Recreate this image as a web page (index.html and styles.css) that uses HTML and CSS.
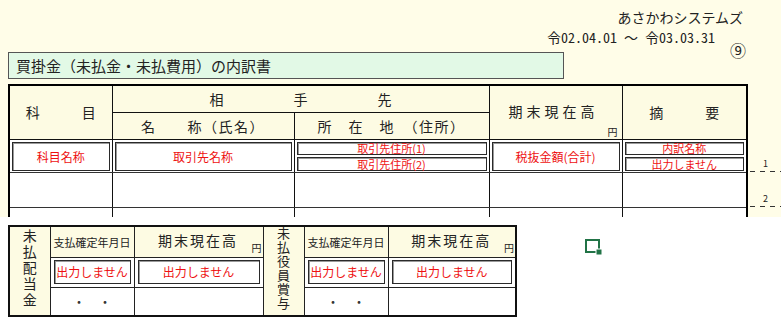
FILE: index.html
```html
<!DOCTYPE html>
<html lang="ja">
<head>
<meta charset="utf-8">
<title>買掛金（未払金・未払費用）の内訳書</title>
<link rel="stylesheet" href="styles.css">
</head>
<body>
<section class="top">
  <div class="meta">
    <div class="company">あさかわシステムズ</div>
    <div class="period">令<span class="hw">02.04.01 </span>～<span class="hw"> </span>令<span class="hw">03.03.31</span></div>
  </div>
  <div class="title-row">
    <div class="title">買掛金（未払金・未払費用）の内訳書</div>
    <div class="page-no">⑨</div>
  </div>
  <table class="main">
    <colgroup>
      <col class="c-kamoku"><col class="c-name"><col class="c-addr"><col class="c-amt"><col class="c-memo"><col class="c-no">
    </colgroup>
    <tr class="h1">
      <th rowspan="2" class="first">科　　　目</th>
      <th colspan="2">相　　　　　手　　　　　先</th>
      <th rowspan="2">
        <div class="amt-wrap"><span class="amt-label">期末現在高</span><span class="yen">円</span></div>
      </th>
      <th rowspan="2" class="last">摘　　　要</th>
      <td rowspan="2" class="no-h"></td>
    </tr>
    <tr class="h2">
      <th class="sp">名　　称（氏名）</th>
      <th class="sp">所　在　地　（住所）</th>
    </tr>
    <tr class="data">
      <td class="first"><div class="box">科目名称</div></td>
      <td><div class="box">取引先名称</div></td>
      <td><div class="pair"><div class="box half">取引先住所(1)</div><div class="box half">取引先住所(2)</div></div></td>
      <td><div class="box">税抜金額(合計)</div></td>
      <td class="last"><div class="pair"><div class="box half">内訳名称</div><div class="box half">出力しません</div></div></td>
      <td class="no">1</td>
    </tr>
    <tr class="blank">
      <td class="first"></td><td></td><td></td><td></td><td class="last"></td>
      <td class="no">2</td>
    </tr>
    <tr class="blank">
      <td class="first"></td><td></td><td></td><td></td><td class="last"></td>
      <td class="no"></td>
    </tr>
  </table>
</section>
<section class="bottom">
  <table class="sub">
    <colgroup>
      <col class="s-vert"><col class="s-date"><col class="s-amt"><col class="s-vert"><col class="s-date"><col class="s-amt2">
    </colgroup>
    <tr class="sh">
      <th rowspan="3" class="vert"><span class="vtext v5">未払配当金</span></th>
      <th class="date-h">支払確定年月日</th>
      <th><div class="amt-wrap sm"><span class="amt-label">期末現在高</span><span class="yen">円</span></div></th>
      <th rowspan="3" class="vert"><span class="vtext v6">未払役員賞与</span></th>
      <th class="date-h">支払確定年月日</th>
      <th><div class="amt-wrap sm"><span class="amt-label">期末現在高</span><span class="yen">円</span></div></th>
    </tr>
    <tr class="sd">
      <td><div class="box sbox">出力しません</div></td>
      <td><div class="box sbox">出力しません</div></td>
      <td><div class="box sbox">出力しません</div></td>
      <td><div class="box sbox">出力しません</div></td>
    </tr>
    <tr class="se">
      <td class="dots">・　・</td>
      <td></td>
      <td class="dots">・　・</td>
      <td></td>
    </tr>
  </table>
  <svg class="sel-icon" width="18" height="17" viewBox="0 0 18 17" aria-hidden="true">
    <rect x="1" y="1" width="13" height="12" fill="none" stroke="#217346" stroke-width="2"/>
    <rect x="11" y="10" width="6" height="6" fill="#217346" stroke="#ffffff" stroke-width="1"/>
  </svg>
</section>
</body>
</html>
```

FILE: styles.css
```css
* { box-sizing: border-box; }
html, body { margin: 0; padding: 0; }
body {
  width: 781px;
  height: 320px;
  overflow: hidden;
  background: #ffffff;
  font-family: "Noto Sans CJK JP", "Noto Sans", sans-serif;
  color: #222222;
}
.hw { font-feature-settings: "hwid"; }

/* ---------- upper sheet ---------- */
.top {
  height: 217px;
  background: #fffde8;
  overflow: hidden;
}
.meta {
  padding-top: 8px;
  text-align: right;
  font-size: 14px;
}
.company { line-height: 19px; padding-right: 38px; }
.period { line-height: 20px; padding-right: 66px; }

.title-row {
  display: flex;
  align-items: flex-start;
  margin-top: 5px;
}
.title {
  margin-left: 8px;
  width: 556px;
  height: 27px;
  border: 1px solid #555555;
  background: #e2f9e6;
  font-size: 15px;
  line-height: 25px;
  padding-left: 7px;
}
.page-no {
  margin-left: auto;
  margin-right: 35px;
  margin-top: -10px;
  font-size: 16px;
  line-height: 16px;
}

table { border-collapse: collapse; table-layout: fixed; border-spacing: 0; }

.main { margin: 5px 0 0 8px; width: 772px; }
.c-kamoku { width: 103px; }
.c-name { width: 182px; }
.c-addr { width: 195px; }
.c-amt { width: 133px; }
.c-memo { width: 125px; }
.c-no { width: 34px; }

.main th, .main td {
  padding: 0;
  border: 1px solid #111111;
}
.main th {
  background: #fdfbe3;
  font-weight: normal;
  font-size: 14px;
  text-align: center;
  vertical-align: middle;
}
.main .h1 th { border-top: 2px solid #000000; }
.main .first { border-left: 2px solid #000000; }
.main .last { border-right: 2px solid #000000; }
.main .h1 { height: 27px; }
.main .h2 { height: 27px; }
.main .sp { letter-spacing: 1.5px; }

.main td { background: #ffffff; padding: 2px 2px 1px 2px; vertical-align: middle; }
.main .data { height: 33px; }
.main .blank { height: 35px; }
.main .data td, .main .blank td { border-bottom-color: #333333; }

.main td.no-h,
.main td.no {
  border: none;
  background: transparent;
  padding: 0 13px 4px 0;
  text-align: right;
  vertical-align: bottom;
  font-size: 9px;
  line-height: 9px;
}
.main td.no {
  background-image: repeating-linear-gradient(to right, transparent 0 2px, #333333 2px 7px, transparent 7px 10px);
  background-size: 100% 1px;
  background-position: 0 100%;
  background-repeat: no-repeat;
}

.amt-wrap {
  display: flex;
  flex-direction: column;
  height: 52px;
  padding: 0 4px 1px 0;
}
.amt-label {
  margin: auto 0;
  padding-top: 9px;
  letter-spacing: 4px;
  line-height: 20px;
}
.yen {
  align-self: flex-end;
  font-size: 10px;
  line-height: 10px;
}

.box {
  background: #ffffff;
  border: 1px solid #2a2a2a;
  box-shadow: inset 1px 1px 0 #9a9a9a;
  color: #ee1111;
  font-size: 12px;
  text-align: center;
  height: 29px;
  line-height: 27px;
  white-space: nowrap;
}
.pair { display: flex; flex-direction: column; gap: 2px; }
.box.half { height: 13px; line-height: 11px; font-size: 11px; }
.pair .box.half:last-child { height: 14px; line-height: 12px; }

/* ---------- lower sheet ---------- */
.bottom {
  display: flex;
  align-items: flex-start;
  padding: 8px 0 0 8px;
}
.sub {
  width: 507px;
  border: 2px solid #111111;
}
.s-vert { width: 41px; }
.s-date { width: 84px; }
.s-amt { width: 129px; }
.s-amt2 { width: 128px; }

.sub th, .sub td {
  padding: 0;
  border: 1px solid #222222;
}
.sub th {
  background: #fdfbe3;
  font-weight: normal;
  font-size: 14px;
  text-align: center;
  vertical-align: middle;
}
.sub .sh { height: 31px; }
.sub .sd { height: 30px; }
.sub .se { height: 29px; }
.sub .date-h { font-size: 11px; }

.vtext {
  display: inline-block;
  writing-mode: vertical-rl;
  text-orientation: upright;
  line-height: 1;
}
.v5 { font-size: 14px; letter-spacing: 2px; }
.v6 { font-size: 13px; letter-spacing: 1px; }

.amt-wrap.sm { height: 29px; padding: 0 1px 3px 0; }
.amt-wrap.sm .amt-label { padding-top: 0; letter-spacing: 2px; line-height: 18px; margin: auto 0 -6px 0; }

.sub td { background: #ffffff; padding: 2px 3px; vertical-align: middle; }
.sbox { height: 24px; line-height: 22px; font-size: 12px; }
.dots { text-align: center; font-size: 13px; color: #333333; }

.sel-icon {
  margin-left: 68px;
  margin-top: 14px;
  flex: none;
}
```
